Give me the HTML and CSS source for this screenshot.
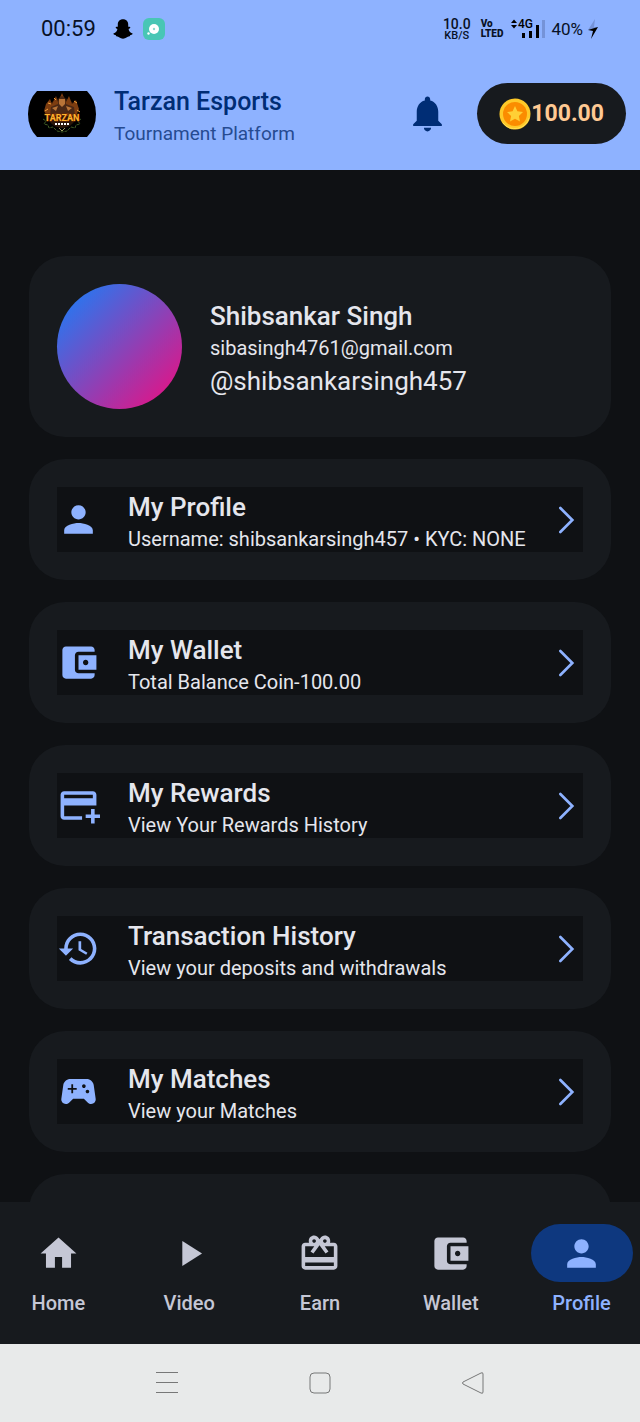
FILE: index.html
```html
<!DOCTYPE html>
<html lang="en">
<head>
    <meta charset="UTF-8">
    <meta name="viewport" content="width=device-width, initial-scale=1.0">
    <title>Tarzan Esports - Profile</title>
    <link rel="stylesheet" href="styles.css">
</head>
<body>
    <header class="top">
        <!-- Phone status bar -->
        <div class="status-bar">
            <span class="clock">00:59</span>
            <svg class="ghost" viewBox="0 0 20 20" aria-hidden="true"><path d="M10 .3c3.200 0 5.200 2.200 5.200 5v2.500c.8-.2 2.100-.2 2.100.6 0 .9-1.300 1-1.700 1.500.3 2.200 1.500 3.800 4 4.600.2 1.100-1.300 1.300-2.200 1.600l-.6 1.200c-2.600-.3-3.500 2.400-6.800 2.400s-4.200-2.700-6.800-2.400l-.6-1.200c-.9-.3-2.400-.5-2.200-1.600 2.500-.8 3.700-2.400 4-4.600-.4-.5-1.700-.6-1.700-1.500 0-.8 1.300-.8 2.100-.6V5.300c0-2.800 2-5 5.200-5z"/></svg>
            <svg class="chat-app" viewBox="0 0 22 22" aria-hidden="true">
                <rect width="22" height="22" rx="6" fill="#48c6b5"/>
                <circle cx="11" cy="11" r="5" fill="#fff"/>
                <circle cx="5.500" cy="15.500" r="1.200" fill="#fff"/>
                <circle cx="11" cy="11" r="1.200" fill="#8ddbd0"/>
            </svg>
            <span class="speed"><b>10.0</b><span>KB/S</span></span>
            <span class="volte"><span>Vo</span><span>LTED</span></span>
            <svg class="signal" viewBox="0 0 34 22" aria-hidden="true">
                <path d="M0 5 3 1.500l3 3.500zM0 7h6L3 10.500z"/>
                <text x="7" y="10">4G</text>
                <path d="M11 15h3v5h-3zM18 13h3v7h-3zM25 7h3v13h-3z"/>
                <path d="M31 2h3v18h-3z" fill="#7593d8"/>
            </svg>
            <span class="battery">40%</span>
            <svg class="bolt" viewBox="0 0 12 20" aria-hidden="true">
                <path d="M8 0 1 11h5l5-3H7z" fill="#7593d8"/>
                <path d="M1 11l10-3-7 12 2-8z"/>
            </svg>
        </div>

        <div class="app-bar">
            <svg class="logo" viewBox="0 0 68 46" role="img" aria-label="Tarzan">
                <path d="M9 0h50q9 9 9 23t-9 23H9Q0 37 0 23T9 0z" fill="#000"/>
                <circle cx="34" cy="22" r="15" fill="#2b170a"/>
                <path d="M18 13l4-5 2 5 4-8 2 6 4-9 4 9 3-6 3 8 4-4 3 9-3 7H19l-3-5z" fill="#7d3d10"/>
                <path d="M22 24l1-8 7-3 1-6 3-2 3 2 1 6 8 3 1 8-8-2-5 3-5-3z" fill="#4a2815"/>
                <path d="M31 8h6v5l-3 3-3-3zM24 17l6-2-2 5zM38 15l6 2-4 3z" fill="#b87438"/>
                <path d="M20 12l3 1M46 10l3 2M17 20l3-2M49 19l3 2M26 7l2 2" stroke="#f4a33a"/>
                <path d="M15 28l3 2-2 3 4 1 1 3 4-1 4 4 5 1 5-1 4-4 4 1 1-3 4-1-2-3 3-2" fill="none" stroke="#3f5b26" stroke-dasharray="3 1"/>
                <text x="34" y="30" class="logo-name">TARZAN</text>
                <path d="M27 33h15" stroke="#fff" stroke-width="2" stroke-dasharray="2 1"/>
                <path d="M31 37l3 3 3-3" fill="none" stroke="#9b9b63"/>
            </svg>
            <div class="brand">
                <h1>Tarzan Esports</h1>
                <p>Tournament Platform</p>
            </div>
            <button class="bell" type="button" aria-label="Notifications">
                <svg class="icon" viewBox="0 0 24 24"><path d="M12 22c1.100 0 2-.9 2-2h-4c0 1.100.89 2 2 2zm6-6v-5c0-3.070-1.640-5.640-4.500-6.320V4c0-.83-.67-1.500-1.500-1.500s-1.500.67-1.500 1.500v.68C7.630 5.360 6 7.920 6 11v5l-2 2v1h16v-1l-2-2z"/></svg>
            </button>
            <a class="coins" href="#wallet">
                <svg class="coin" viewBox="0 0 32 32" aria-hidden="true">
                    <circle cx="16" cy="16" r="15.500" fill="#ffc928"/>
                    <path d="M4 25A15 15 0 0 0 30 20" fill="none" stroke="#ffe15a"/>
                    <circle cx="16" cy="16" r="12" fill="#fb8c00"/>
                    <path d="M16 8l2.400 5.300 5.600.7-4.100 3.900 1.100 5.600-5-2.800-5 2.800 1.100-5.600L8 14l5.600-.7z" fill="#ffcf35"/>
                </svg>
                <span>100.00</span>
            </a>
        </div>
    </header>

    <main class="content">
        <section class="card user-card">
            <div class="avatar"></div>
            <div class="user-info">
                <h2>Shibsankar Singh</h2>
                <p>sibasingh4761@gmail.com</p>
                <p class="handle">@shibsankarsingh457</p>
            </div>
        </section>

        <a class="card" href="#profile">
            <div class="row">
                <svg class="icon" viewBox="0 0 24 24"><path d="M12 12c2.210 0 4-1.790 4-4s-1.790-4-4-4-4 1.790-4 4 1.790 4 4 4zm0 2c-2.670 0-8 1.340-8 4v2h16v-2c0-2.660-5.330-4-8-4z"/></svg>
                <div class="row-text">
                    <h2>My Profile</h2>
                    <p>Username: shibsankarsingh457 • KYC: NONE</p>
                </div>
                <svg class="arrow" viewBox="0 0 24 24"><path d="M7 3l9 9-9 9"/></svg>
            </div>
        </a>

        <a class="card" href="#wallet">
            <div class="row">
                <svg class="icon" viewBox="0 0 24 24"><path d="M21 18v1c0 1.100-.9 2-2 2H5c-1.110 0-2-.9-2-2V5c0-1.100.89-2 2-2h14c1.100 0 2 .9 2 2v1h-9c-1.110 0-2 .9-2 2v8c0 1.100.89 2 2 2h9zm-9-2h10V8H12v8zm4-2.500c-.83 0-1.500-.67-1.500-1.500s.67-1.500 1.500-1.500 1.500.67 1.500 1.500-.67 1.500-1.500 1.500z"/></svg>
                <div class="row-text">
                    <h2>My Wallet</h2>
                    <p>Total Balance Coin-100.00</p>
                </div>
                <svg class="arrow" viewBox="0 0 24 24"><path d="M7 3l9 9-9 9"/></svg>
            </div>
        </a>

        <a class="card" href="#rewards">
            <div class="row">
                <svg class="icon" viewBox="0 0 24 24"><path d="M20 4H4c-1.110 0-1.990.89-1.990 2L2 18c0 1.110.89 2 2 2h10v-2H4v-6h18V6c0-1.110-.89-2-2-2zm0 4H4V6h16v2zm4 9v2h-3v3h-2v-3h-3v-2h3v-3h2v3h3z"/></svg>
                <div class="row-text">
                    <h2>My Rewards</h2>
                    <p>View Your Rewards History</p>
                </div>
                <svg class="arrow" viewBox="0 0 24 24"><path d="M7 3l9 9-9 9"/></svg>
            </div>
        </a>

        <a class="card" href="#history">
            <div class="row">
                <svg class="icon" viewBox="0 0 24 24"><path d="M13 3c-4.970 0-9 4.030-9 9H1l3.890 3.890.07.14L9 12H6c0-3.870 3.130-7 7-7s7 3.130 7 7-3.130 7-7 7c-1.930 0-3.680-.79-4.940-2.060l-1.420 1.420C8.270 19.990 10.510 21 13 21c4.970 0 9-4.030 9-9s-4.030-9-9-9zm-1 5v5l4.280 2.540.72-1.210-3.500-2.080V8H12z"/></svg>
                <div class="row-text">
                    <h2>Transaction History</h2>
                    <p>View your deposits and withdrawals</p>
                </div>
                <svg class="arrow" viewBox="0 0 24 24"><path d="M7 3l9 9-9 9"/></svg>
            </div>
        </a>

        <a class="card" href="#matches">
            <div class="row">
                <svg class="icon" viewBox="0 0 24 24"><path d="M21.580 16.090l-1.090-7.660C20.210 6.460 18.520 5 16.530 5H7.470C5.480 5 3.790 6.460 3.510 8.430l-1.090 7.660C2.200 17.630 3.390 19 4.940 19c.68 0 1.320-.27 1.800-.75L9 16h6l2.250 2.250c.48.48 1.130.75 1.800.75 1.560 0 2.750-1.370 2.530-2.910zM11 11H9v2H8v-2H6v-1h2V8h1v2h2v1zm4-1c-.55 0-1-.45-1-1s.45-1 1-1 1 .45 1 1-.45 1-1 1zm2 3c-.55 0-1-.45-1-1s.45-1 1-1 1 .45 1 1-.45 1-1 1z"/></svg>
                <div class="row-text">
                    <h2>My Matches</h2>
                    <p>View your Matches</p>
                </div>
                <svg class="arrow" viewBox="0 0 24 24"><path d="M7 3l9 9-9 9"/></svg>
            </div>
        </a>

        <div class="card"></div>
    </main>

    <!-- Bottom navigation -->
    <nav class="tabs">
        <a href="#home">
            <span class="tab-icon"><svg class="icon" viewBox="0 0 24 24"><path d="M10 20v-6h4v6h5v-8h3L12 3 2 12h3v8z"/></svg></span>
            <span>Home</span>
        </a>
        <a href="#video">
            <span class="tab-icon"><svg class="icon" viewBox="0 0 24 24"><path d="M8 5v14l11-7z"/></svg></span>
            <span>Video</span>
        </a>
        <a href="#earn">
            <span class="tab-icon"><svg class="icon" viewBox="0 0 24 24"><path d="M20 6h-2.180c.11-.31.18-.65.18-1 0-1.660-1.340-3-3-3-1.050 0-1.960.54-2.500 1.350l-.5.67-.5-.68C10.960 2.540 10.050 2 9 2 7.340 2 6 3.340 6 5c0 .35.070.69.18 1H4c-1.110 0-1.990.89-1.990 2L2 19c0 1.110.89 2 2 2h16c1.110 0 2-.89 2-2V8c0-1.110-.89-2-2-2zm-5-2c.55 0 1 .45 1 1s-.45 1-1 1-1-.45-1-1 .45-1 1-1zM9 4c.55 0 1 .45 1 1s-.45 1-1 1-1-.45-1-1 .45-1 1-1zm11 15H4v-2h16v2zm0-5H4V8h5.080L7 10.830 8.620 12 11 8.760l1-1.360 1 1.360L15.380 12 17 10.830 14.920 8H20v6z"/></svg></span>
            <span>Earn</span>
        </a>
        <a href="#wallet">
            <span class="tab-icon"><svg class="icon" viewBox="0 0 24 24"><path d="M21 18v1c0 1.100-.9 2-2 2H5c-1.110 0-2-.9-2-2V5c0-1.100.89-2 2-2h14c1.100 0 2 .9 2 2v1h-9c-1.110 0-2 .9-2 2v8c0 1.100.89 2 2 2h9zm-9-2h10V8H12v8zm4-2.500c-.83 0-1.500-.67-1.500-1.500s.67-1.500 1.500-1.500 1.500.67 1.500 1.500-.67 1.500-1.500 1.500z"/></svg></span>
            <span>Wallet</span>
        </a>
        <a class="active" href="#profile">
            <span class="tab-icon"><svg class="icon" viewBox="0 0 24 24"><path d="M12 12c2.210 0 4-1.790 4-4s-1.790-4-4-4-4 1.790-4 4 1.790 4 4 4zm0 2c-2.670 0-8 1.340-8 4v2h16v-2c0-2.660-5.330-4-8-4z"/></svg></span>
            <span>Profile</span>
        </a>
    </nav>

    <!-- Phone system buttons -->
    <div class="system-bar">
        <button type="button" aria-label="Recent apps"><svg viewBox="0 0 24 24"><path d="M1 1.500h22M1 11.500h22M1 21.500h22"/></svg></button>
        <button type="button" aria-label="Home screen"><svg viewBox="0 0 24 24"><rect x="2" y="2" width="20" height="20" rx="4"/></svg></button>
        <button type="button" aria-label="Back"><svg viewBox="0 0 24 24"><path d="M2 11 20 2q2-1 2 1v18q0 2-2 1L2 13q-1-1 0-2z"/></svg></button>
    </div>
</body>
</html>
```

FILE: styles.css
```css
* {
    box-sizing: border-box;
}
body {
    margin: 0;
    height: 100vh;
    display: flex;
    flex-direction: column;
    background-color: #0f1114;
    color: #e5e6ed;
    font-family: Roboto, sans-serif;
}
h1, h2, p {
    margin: 0;
}
a {
    color: inherit;
    text-decoration: none;
}
button {
    padding: 0;
    border: none;
    background: none;
    color: inherit;
    cursor: pointer;
}
svg {
    display: block;
    flex-shrink: 0;
}
.icon {
    width: 43px;
    height: 43px;
    fill: currentColor;
}

/* Header */
.top {
    background-color: #8eb2ff;
    color: #002d75;
}
.status-bar {
    display: flex;
    align-items: center;
    height: 57px;
    padding: 0 41px;
    color: #081126;
}
.clock {
    font-size: 22px;
    margin-right: 17px;
}
.ghost {
    width: 20px;
    height: 20px;
    margin-right: 10px;
}
.chat-app {
    width: 22px;
    height: 22px;
    margin-right: auto;
}
.speed, .volte {
    display: flex;
    flex-direction: column;
    align-items: center;
    margin-right: 10px;
    font-size: 11px;
    font-weight: 500;
    line-height: 10px;
}
.speed b {
    font-size: 14px;
    font-weight: 500;
    line-height: 14px;
}
.volte {
    align-items: flex-start;
    font-size: 10px;
    font-weight: 900;
    margin-right: 8px;
}
.signal {
    width: 34px;
    height: 22px;
    margin-right: 6px;
}
.signal text {
    font-size: 12px;
    font-weight: 500;
}
.battery {
    font-size: 17px;
    margin-right: 4px;
}
.bolt {
    width: 12px;
    height: 20px;
}
.app-bar {
    display: flex;
    align-items: center;
    height: 113px;
    padding: 0 14px 0 28px;
}
.logo {
    width: 68px;
    height: 46px;
}
.logo-name {
    font-size: 9px;
    font-weight: 700;
    text-anchor: middle;
    fill: #ffb52e;
    stroke: #6b2500;
    stroke-width: 1px;
    paint-order: stroke;
}
.brand {
    flex: 1;
    margin-left: 18px;
    padding-top: 4px;
}
.brand h1 {
    font-size: 25px;
    font-weight: 500;
    line-height: 36px;
}
.brand p {
    font-size: 19px;
    line-height: 28px;
    color: #264b91;
}
.bell {
    margin-right: 28px;
}
.coins {
    display: flex;
    align-items: center;
    height: 61px;
    padding: 0 22px;
    border-radius: 31px;
    background-color: #171a1e;
    color: #ffc993;
    font-size: 23px;
    font-weight: 700;
}
.coin {
    width: 32px;
    height: 32px;
}

/* Cards */
.content {
    flex: 1;
    min-height: 0;
    display: flex;
    flex-direction: column;
    gap: 22px;
    padding: 86px 29px 0;
    overflow-y: auto;
    scrollbar-width: none;
}
.card {
    flex-shrink: 0;
    min-height: 121px;
    padding: 28px;
    border-radius: 36px;
    background-color: #171a1e;
}
.card h2 {
    font-size: 26px;
    font-weight: 500;
    line-height: 36px;
}
.card p {
    font-size: 20px;
    line-height: 29px;
}
.user-card {
    display: flex;
    align-items: center;
    gap: 28px;
}
.user-info {
    padding-top: 3px;
}
.avatar {
    width: 125px;
    height: 125px;
    border-radius: 50%;
    background: linear-gradient(135deg, #1083fd, #f50a7b);
}
.card .handle {
    font-size: 26px;
    line-height: 36px;
}
.row {
    display: flex;
    align-items: center;
    background-color: #0f1114;
}
.row .icon {
    color: #8eb2ff;
}
.row-text {
    flex: 1;
    min-width: 0;
    margin-left: 28px;
}
.row-text h2 {
    line-height: 40px;
}
.row-text p {
    line-height: 25px;
}
.arrow {
    width: 32px;
    height: 32px;
    fill: none;
    stroke: #8eb2ff;
    stroke-width: 2;
    stroke-linecap: round;
}

/* Bottom navigation */
.tabs {
    display: flex;
    gap: 14px;
    height: 142px;
    padding-top: 22px;
    background-color: #171a1e;
    color: #c5c7d5;
    font-size: 20px;
    font-weight: 500;
    line-height: 28px;
}
.tabs a {
    flex: 1;
    display: flex;
    flex-direction: column;
    align-items: center;
    gap: 7px;
}
.tab-icon {
    display: flex;
    align-items: center;
    justify-content: center;
    width: 102px;
    height: 58px;
    border-radius: 29px;
}
.tabs .active {
    color: #8eb2ff;
}
.active .tab-icon {
    background-color: #0e387f;
}

/* System buttons */
.system-bar {
    display: flex;
    align-items: center;
    justify-content: center;
    gap: 129px;
    height: 78px;
    background-color: #e8eaea;
}
.system-bar svg {
    width: 24px;
    height: 24px;
    fill: none;
    stroke: #777878;
    stroke-width: 1;
}
```
